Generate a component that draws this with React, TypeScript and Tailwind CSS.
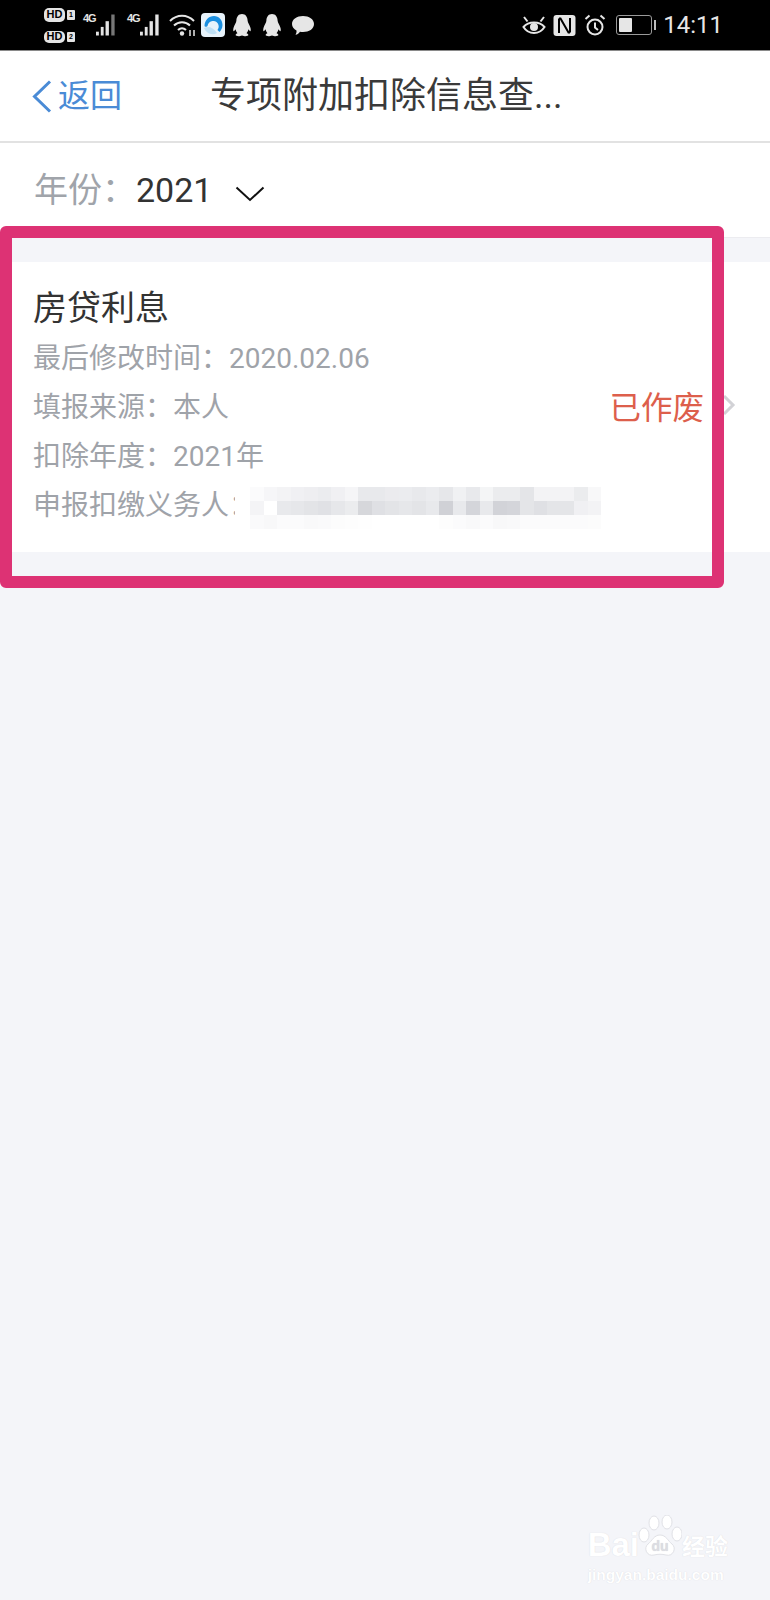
import React from 'react';

const FONT = "font-['Roboto','Noto_Sans_CJK_SC',sans-serif]";

// 打码区域的色块,三行
const BLUR_ROWS = [
  ['bg-[#fbfbfc]', 'bg-[#f6f6f8]', 'bg-[#f3f3f5]', 'bg-[#f0f0f3]', 'bg-[#eeeef1]', 'bg-[#ebecef]', 'bg-[#f0f0f3]', 'bg-[#f5f5f7]', 'bg-[#e8e9ec]', 'bg-[#e8e9ec]', 'bg-[#ebebee]', 'bg-[#ebecef]', 'bg-[#e8e9ec]', 'bg-[#ebecef]', 'bg-[#e6e7ea]', 'bg-[#f0f1f3]', 'bg-[#e8e9ec]', 'bg-[#f4f5f6]', 'bg-[#ebecee]', 'bg-[#ebecee]', 'bg-[#e4e5e8]', 'bg-[#f3f3f5]', 'bg-[#f3f3f5]', 'bg-[#f3f3f5]', 'bg-[#ebecee]', 'bg-[#f8f8f9]'],
  ['bg-[#f4f4f6]', 'bg-[#ffffff]', 'bg-[#e8e9ec]', 'bg-[#e6e7ea]', 'bg-[#e3e4e7]', 'bg-[#e0e1e5]', 'bg-[#e6e7ea]', 'bg-[#ebecee]', 'bg-[#d6d7db]', 'bg-[#dfe0e4]', 'bg-[#e3e4e7]', 'bg-[#e6e7ea]', 'bg-[#e3e4e7]', 'bg-[#e8e9ec]', 'bg-[#d0d1d6]', 'bg-[#e8e9ec]', 'bg-[#d4d5da]', 'bg-[#e8e9ec]', 'bg-[#d2d3d8]', 'bg-[#d4d5da]', 'bg-[#e4e5e8]', 'bg-[#dfe0e4]', 'bg-[#e4e5e8]', 'bg-[#e4e5e8]', 'bg-[#f0f0f3]', 'bg-[#f3f3f5]'],
  ['bg-[#fafafb]', 'bg-[#f8f8f9]', 'bg-[#fbfbfc]', 'bg-[#fbfbfc]', 'bg-[#f9f9fa]', 'bg-[#fafafb]', 'bg-[#fcfcfc]', 'bg-[#fdfdfd]', 'bg-[#fefefe]', 'bg-[#ffffff]', 'bg-[#ffffff]', 'bg-[#ffffff]', 'bg-[#ffffff]', 'bg-[#ffffff]', 'bg-[#fdfdfd]', 'bg-[#fbfbfc]', 'bg-[#f9f9fa]', 'bg-[#fbfbfc]', 'bg-[#f8f8f9]', 'bg-[#f9f9fa]', 'bg-[#fbfbfc]', 'bg-[#fbfbfc]', 'bg-[#fbfbfc]', 'bg-[#fbfbfc]', 'bg-[#fbfbfc]', 'bg-[#fcfcfc]'],
];

const HdBadge: React.FC<{ n: string; tall?: boolean }> = ({ n, tall }) => (
  <div className="flex items-center gap-[2px]">
    <span
      className={`flex w-[21px] items-center justify-center rounded-[5px] bg-[#e4e4e4] font-['Liberation_Sans',sans-serif] text-[11px] font-bold leading-none text-black ${
        tall ? 'h-[14px]' : 'h-[12px]'
      }`}
    >
      HD
    </span>
    <span className="flex h-[10px] w-[8px] items-center justify-center rounded-[1px] bg-[#e4e4e4] font-['Liberation_Sans',sans-serif] text-[7px] font-bold leading-none text-black">
      {n}
    </span>
  </div>
);

const Signal: React.FC<{ last?: string }> = ({ last = '#e4e4e4' }) => (
  <div className="flex h-[22px] w-[34px] items-start">
    <span className="w-[12px] font-['Liberation_Sans',sans-serif] text-[11px] font-bold leading-[9px] tracking-[-1px] text-[#e4e4e4]">4G</span>
    <svg width="22" height="22" viewBox="0 0 22 22" className="ml-[1px]">
      <rect x="0" y="18" width="3" height="4" fill="#e4e4e4" />
      <rect x="5" y="13" width="3" height="9" fill="#e4e4e4" />
      <rect x="10" y="7" width="3.500" height="15" fill="#e4e4e4" />
      <rect x="16" y="0" width="3.500" height="22" fill={last} />
    </svg>
  </div>
);

const Penguin = () => (
  <svg width="20" height="24" viewBox="0 0 22 25" preserveAspectRatio="none">
    <path
      d="M11 1c-4 0-6 3-6.200 7-.1 2-2 4-3 7-.8 2.500-.5 4 .2 4 .5 0 1-1 2-2 .3 2 1 3 2 4-1 .5-2 1-2 2 0 1 3 1.500 5 1 .8-.2 1.200-.5 2-.5s1.200.3 2 .5c2 .5 5 0 5-1 0-1-1-1.500-2-2 1-1 1.700-2 2-4 1 1 1.500 2 2 2 .7 0 1-1.500.2-4-1-3-2.900-5-3-7C17 4 15 1 11 1z"
      fill="#e6e6e6"
    />
  </svg>
);

const StatusBar = () => (
  <div className="flex h-[51px] items-center justify-between border-b border-[#8a8a8a] bg-black pl-[44px] pr-[47px]">
    <div className="flex items-center">
      <div className="flex flex-col gap-[9px]">
        <HdBadge n="1" tall />
        <HdBadge n="2" />
      </div>
      <div className="ml-[8px] flex items-center gap-[10px]">
        <Signal last="#777777" />
        <Signal />
      </div>
      {/* wifi */}
      <svg width="28" height="24" viewBox="0 0 28 24" className="ml-[7px]">
        <path d="M2 8c7-7 17-7 24 0M6 12.500c4.500-4.500 11.500-4.500 16 0M10 17c2.500-2.500 5.500-2.500 8 0" fill="none" stroke="#e6e6e6" strokeWidth="2" />
        <circle cx="14" cy="20.500" r="2.200" fill="#e6e6e6" />
        <path d="M22 17v6M26 17v6" stroke="#e6e6e6" strokeWidth="1.500" />
      </svg>
      {/* 浏览器图标 */}
      <svg width="24" height="24" viewBox="0 0 24 24" className="ml-[5px]">
        <rect width="24" height="24" rx="4" fill="#e8f3fb" />
        <path d="M3.500 13C3.500 7 8 3 13 3c5 0 8.500 4 8.500 9 0 3-1.500 5.500-3 7l-2-2c1-1.500 1.500-3 1-5-.8-3-3.500-4.500-6-4-2.500.5-4.500 2-5 5-.1 1-3 1-3 0z" fill="#1b8fe0" />
        <path d="M3 15c4-2 9-1 13 5-5 3-11 0-13-5z" fill="#bfe0f5" />
      </svg>
      <div className="ml-[7px] flex items-center gap-[10px]">
        <Penguin />
        <Penguin />
      </div>
      {/* 微信气泡 */}
      <svg width="24" height="24" viewBox="0 0 24 24" className="ml-[9px]">
        <path d="M12 3c6 0 11 3 11 8s-5 8-11 8c-1 0-2 0-3-.3C8 20 6.500 21.500 4.500 21.800c.8-1.300 1.200-2.600 1-4.300C2.800 16 1 13.800 1 11c0-5 5-8 11-8z" fill="#e6e6e6" />
      </svg>
    </div>
    <div className="flex items-center">
      {/* 护眼 */}
      <svg width="24" height="22" viewBox="0 0 24 22">
        <path d="M1.500 13c5-6 16-6 21 0-5 8-16 8-21 0z" fill="none" stroke="#e6e6e6" strokeWidth="2" />
        <circle cx="12" cy="13" r="4" fill="#e6e6e6" />
        <path d="M2 3l3.500 4.500M22 3l-3.500 4.500" stroke="#e6e6e6" strokeWidth="2" />
      </svg>
      {/* NFC */}
      <svg width="23" height="23" viewBox="0 0 23 23" className="ml-[7px]">
        <rect x="0.500" y="1" width="22" height="21" rx="3" fill="#e6e6e6" />
        <path d="M6 19V4.500M17 18.500V4M6 4.500h1.500l8 14H17" fill="none" stroke="#000" strokeWidth="2" />
      </svg>
      {/* 闹钟 */}
      <svg width="22" height="22" viewBox="0 0 22 22" className="ml-[8px]">
        <circle cx="11" cy="13" r="7.500" fill="none" stroke="#e6e6e6" strokeWidth="2" />
        <path d="M11 8.500v5l3 2.500M1.500 5l4-3.500M20.500 5l-4-3.500" fill="none" stroke="#e6e6e6" strokeWidth="2" />
      </svg>
      {/* 电量 */}
      <div className="ml-[10px] flex items-center">
        <div className="h-[20px] w-[36px] rounded-[3px] border border-[#9a9a9a] p-[2px]">
          <div className="h-full w-[13px] rounded-[1px] bg-[#e6e6e6]" />
        </div>
        <div className="ml-[2px] h-[10px] w-[2px] bg-[#bdbdbd]" />
      </div>
      <span className="ml-[7px] font-['Roboto',sans-serif] text-[24px] leading-none text-[#e6e6e6]">14:11</span>
    </div>
  </div>
);

const NavBar = () => (
  <div className="flex h-[92px] items-center border-b-2 border-[#e2e2e2] bg-white">
    <div className="ml-[32px] flex w-[178px] items-center text-[#4a8bd6]">
      <svg width="20" height="33" viewBox="0 0 20 33" className="mr-[6px] shrink-0">
        <path d="M18 1.500L2.500 16.500 18 31.500" fill="none" stroke="currentColor" strokeWidth="3" />
      </svg>
      <span className="text-[32px] leading-none">返回</span>
    </div>
    <span className="text-[36px] leading-none text-[#3a3a3a]">专项附加扣除信息查...</span>
  </div>
);

const DETAILS = ['最后修改时间：2020.02.06', '填报来源：本人', '扣除年度：2021年'];

const RecordCard = () => (
  <div className="mt-[24px] flex h-[290px] items-center bg-white pl-[33px] pr-[34px]">
    <div className="flex-1">
      <p className="mb-[3px] h-[48px] text-[34px] leading-[48px] text-[#333333]">房贷利息</p>
      {DETAILS.map((text) => (
        <p key={text} className="h-[49px] text-[28px] leading-[48px] text-[#9fa3a9]">
          {text}
        </p>
      ))}
      <div className="flex h-[48px] items-center">
        <span className="w-[217px] shrink-0 whitespace-nowrap text-[28px] leading-[48px] text-[#9fa3a9]">申报扣缴义务人：</span>
        {/* 打码盖住了冒号的一半 */}
        <div className="relative mt-[3px] -ml-[15px] flex flex-col bg-white pl-[15px]">
          {BLUR_ROWS.map((row, i) => (
            <div key={i} className="flex">
              {row.map((cls, j) => (
                <div key={j} className={`h-[14px] w-[13.500px] ${cls}`} />
              ))}
            </div>
          ))}
        </div>
      </div>
    </div>
    <span className="mt-[3px] text-[31.500px] leading-none text-[#dd5f4c]">已作废</span>
    <svg width="14" height="22" viewBox="0 0 14 22" className="-mt-[5px] ml-[18px] shrink-0">
      <path d="M2 2l9 9-9 9" fill="none" stroke="#d2d2d6" strokeWidth="3" />
    </svg>
  </div>
);

const Watermark = () => (
  <div className="absolute bottom-[18px] right-[42px] flex flex-col items-start text-white [text-shadow:0_0_1px_#d4d5da]">
    <div className="flex items-end">
      <span className="font-['Liberation_Sans',sans-serif] text-[33px] font-bold leading-none">Bai</span>
      <svg width="44" height="46" viewBox="0 0 44 46" className="-ml-[1px]">
        <ellipse cx="6" cy="20" rx="5" ry="7" fill="#fff" stroke="#e0e1e6" />
        <ellipse cx="16" cy="8" rx="5" ry="7" fill="#fff" stroke="#e0e1e6" />
        <ellipse cx="29" cy="7" rx="5" ry="7" fill="#fff" stroke="#e0e1e6" />
        <ellipse cx="39" cy="19" rx="5" ry="7" fill="#fff" stroke="#e0e1e6" />
        <path d="M22 20c6 0 8 6 12 9 5 4 1 13-6 11-4-1-8-1-12 0-7 2-11-7-6-11 4-3 6-9 12-9z" fill="#fff" stroke="#e0e1e6" />
        <text x="22" y="36" textAnchor="middle" fontSize="14" fontWeight="700" fill="#dcdde2" fontFamily="Liberation Sans">du</text>
      </svg>
      <span className="mb-[2px] text-[23px] font-bold leading-none">经验</span>
    </div>
    <span className="mt-[6px] font-['Liberation_Sans',sans-serif] text-[15.500px] font-bold leading-none">jingyan.baidu.com</span>
  </div>
);

export default function App() {
  return (
    <div className={`relative flex h-[1600px] w-[770px] flex-col overflow-hidden bg-[#f4f5f9] ${FONT}`}>
      <StatusBar />
      <NavBar />
      <div className="flex h-[95px] items-center border-b border-[#ececf0] bg-white pl-[34px]">
        <span className="text-[34px] leading-none text-[#a0a4aa]">年份：</span>
        <span className="text-[34px] leading-none text-[#333333]">2021</span>
        <svg width="30" height="16" viewBox="0 0 30 16" className="ml-[23px] mt-[8px] shrink-0">
          <path d="M1.500 1.500L15 14 28.500 1.500" fill="none" stroke="#111111" strokeWidth="2" />
        </svg>
      </div>
      <RecordCard />

      {/* 截图上的红色标注框 */}
      <div className="absolute left-0 top-[226px] h-[362px] w-[724px] rounded-[6px] border-[12.500px] border-[#dd3274]" />
      <Watermark />
    </div>
  );
}
